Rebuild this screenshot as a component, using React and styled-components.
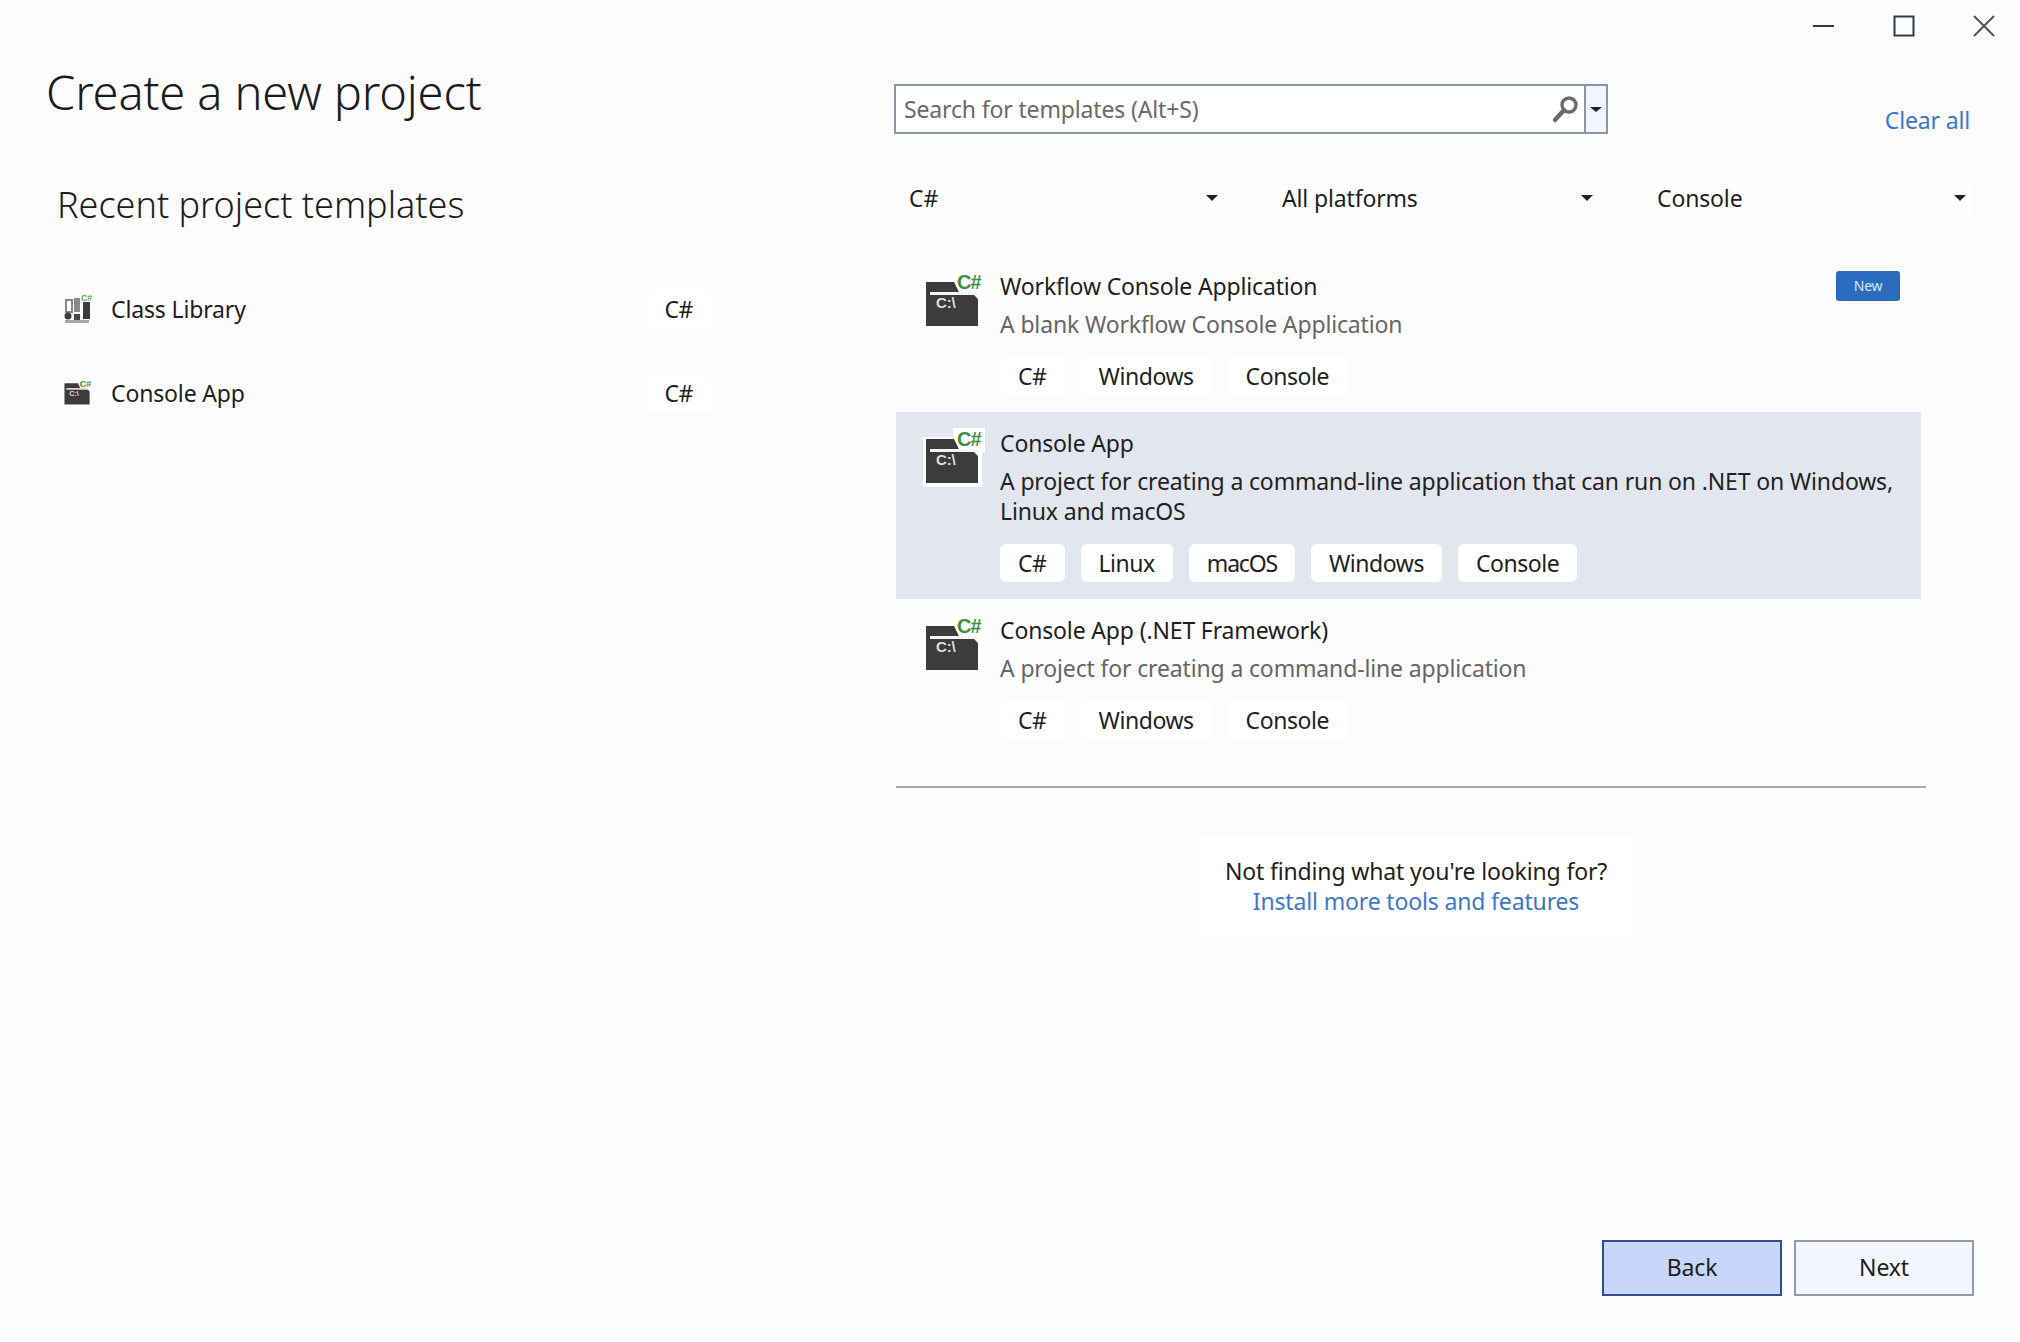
import React from "react";
import styled, { createGlobalStyle } from "styled-components";

const FONT = `"Noto Sans", "Open Sans", sans-serif`;

const Global = createGlobalStyle`
  html, body { margin: 0; padding: 0; background: #fcfcfc; overflow: hidden; }
  * { box-sizing: border-box; }
`;

const Page = styled.div`
  width: 2020px;
  height: 1342px;
  background: #fcfcfc;
  display: flex;
  flex-direction: column;
  font-family: ${FONT};
  font-size: 23px;
  letter-spacing: -0.15px;
  color: #1e1e1e;
`;

const TitleBar = styled.div`
  height: 52px;
  display: flex;
  justify-content: flex-end;
  gap: 40px;
  padding-right: 16px;
`;

const WinButton = styled.div`
  width: 40px;
  height: 52px;
  display: flex;
  align-items: center;
  justify-content: center;
`;

const Main = styled.div`
  flex: 1;
  display: grid;
  grid-template-columns: 894px 1fr;
  min-height: 0;
`;

const LeftColumn = styled.div`
  padding: 10px 0 0 46px;
`;

const PageTitle = styled.h1`
  margin: 0;
  font-size: 47px;
  font-weight: 300;
  line-height: 60px;
  letter-spacing: -0.13px;
  color: #1c1c1c;
`;

const SectionTitle = styled.h2`
  margin: 58px 0 0 11px;
  font-size: 36px;
  font-weight: 300;
  line-height: 50px;
  letter-spacing: 0;
  color: #1c1c1c;
`;

const RecentList = styled.div`
  margin: 60px 0 0 17px;
  width: 648px;
  display: flex;
  flex-direction: column;
  gap: 46px;
`;

const RecentRow = styled.div`
  display: flex;
  align-items: center;
  height: 38px;
`;

const RecentName = styled.span`
  margin-left: 18px;
  flex: 1;
`;

const RightColumn = styled.div`
  padding-top: 32px;
  display: flex;
  flex-direction: column;
`;

const SearchRow = styled.div`
  display: flex;
  justify-content: space-between;
  align-items: flex-end;
  width: 1076px;
`;

const SearchBox = styled.div`
  width: 714px;
  height: 50px;
  border: 2px solid #8b95a8;
  background: #fff;
  display: flex;
  align-items: stretch;
`;

const SearchText = styled.div`
  flex: 1;
  padding: 1px 0 0 8px;
  line-height: 44px;
  color: #6a6a6a;
`;

const SearchIconWrap = styled.div`
  width: 36px;
  display: flex;
  align-items: center;
  justify-content: center;
`;

const SearchDrop = styled.div`
  width: 22px;
  background: #f2f5fd;
  border-left: 2px solid #8b95a8;
  display: flex;
  align-items: center;
  justify-content: center;
`;

const Link = styled.a`
  color: #3b78c6;
  line-height: 28px;
`;

const Filters = styled.div`
  margin: 43px 0 0 4px;
  display: grid;
  grid-template-columns: 326px 328px 326px;
  column-gap: 47px;
`;

const Filter = styled.div`
  height: 40px;
  padding: 1px 6px 0 11px;
  background: #fefefe;
  display: flex;
  align-items: center;
  justify-content: space-between;
`;

const Caret = styled.span`
  width: 0;
  height: 0;
  border-left: 6px solid transparent;
  border-right: 6px solid transparent;
  border-top: ${(p) => p.$h || 6}px solid #222;
`;

const Templates = styled.div`
  margin: 38px 0 0 2px;
  width: 1025px;
  display: flex;
  flex-direction: column;
`;

const Template = styled.div`
  display: grid;
  grid-template-columns: 77px 1fr;
  padding: 16px 20px 17px 27px;
  background: ${(p) => (p.$selected ? "#e3e6ee" : "transparent")};
`;

const TemplateBody = styled.div`
  display: flex;
  flex-direction: column;
  min-width: 0;
`;

const TemplateHead = styled.div`
  display: flex;
  justify-content: space-between;
  align-items: flex-start;
  line-height: 30px;
`;

const NewBadge = styled.span`
  width: 64px;
  height: 30px;
  margin-right: 1px;
  border-radius: 3px;
  background: #2a6cbe;
  color: #dce8f8;
  font-size: 14px;
  letter-spacing: -0.3px;
  line-height: 30px;
  text-align: center;
`;

const Description = styled.div`
  margin-top: 8px;
  line-height: 30px;
  color: ${(p) => (p.$selected ? "#222" : "#666")};
`;

const Chips = styled.div`
  margin-top: 18px;
  display: flex;
  gap: 16px;
`;

const Chip = styled.span`
  height: 38px;
  padding: 0 18px;
  border-radius: 6px;
  background: #fff;
  line-height: 38px;
  letter-spacing: ${(p) => (p.$tight ? "-1.2px" : "-0.45px")};
  color: #1e1e1e;
  white-space: nowrap;
`;

const Divider = styled.div`
  margin: 30px 0 0 2px;
  width: 1030px;
  height: 2px;
  background: #a8a8a8;
`;

const HelpWrap = styled.div`
  margin: 47px 0 0 2px;
  width: 1040px;
  display: flex;
  justify-content: center;
`;

const HelpBox = styled.div`
  width: 432px;
  height: 99px;
  padding-top: 21px;
  background: #fff;
  text-align: center;
  line-height: 30px;
`;

const HelpLine = styled.div``;

const Footer = styled.div`
  display: flex;
  justify-content: flex-end;
  gap: 12px;
  padding: 0 46px 46px 0;
`;

const Button = styled.button`
  width: 180px;
  height: 56px;
  padding: 0 0 2px;
  font: inherit;
  letter-spacing: inherit;
  color: #1e1e1e;
  border: 2px solid ${(p) => (p.$active ? "#2f4f8c" : "#8f99aa")};
  background: ${(p) => (p.$active ? "#c8d7f9" : "#f3f6fe")};
`;

const ConsoleIcon = ({ size = 62 }) => (
  <svg width={size} height={(size * 60) / 62} viewBox="0 0 62 60">
    <path d="M0 9H30V0H62V25H59V59H0Z" fill="#fff" />
    <path d="M3 11H31L36 21H48L55 28V55H3Z" fill="#3c3c3c" />
    <path d="M33 11h5l4 10H36Z" fill="#fff" />
    <rect x="7" y="21" width="47" height="3" fill="#f4f4f4" />
    <text x="13" y="37" fontFamily="Liberation Sans" fontSize="15" fontWeight="700" fill="#dedede">
      C:\
    </text>
    <text x="34" y="18" fontFamily="Liberation Sans" fontSize="20" fontWeight="700" fill="#3f8f3f" letterSpacing="-1">
      C#
    </text>
  </svg>
);

const LibraryIcon = () => (
  <svg width="30" height="30" viewBox="0 0 30 30">
    <rect x="3" y="6" width="6" height="12" fill="#fff" stroke="#888" strokeWidth="2" />
    <rect x="11" y="4" width="6" height="14" fill="#8a8a8a" />
    <rect x="20" y="8" width="7" height="17" fill="#3c3c3c" />
    <rect x="11" y="20" width="6" height="7" fill="#4a4a4a" />
    <circle cx="5" cy="22" r="3.5" fill="#3c3c3c" />
    <rect x="2" y="26" width="24" height="3" fill="#a6a6a6" />
    <text x="18" y="7" fontFamily="Liberation Sans" fontSize="9" fontWeight="700" fill="#57a857">
      C#
    </text>
  </svg>
);

const Minimize = () => (
  <svg width="22" height="4" viewBox="0 0 22 4">
    <rect x="0" y="1" width="21" height="2" fill="#2d3a4f" />
  </svg>
);
const Maximize = () => (
  <svg width="22" height="22" viewBox="0 0 22 22">
    <rect x="1.5" y="1.5" width="19" height="19" fill="none" stroke="#2d3a4f" strokeWidth="2" />
  </svg>
);
const Close = () => (
  <svg width="22" height="22" viewBox="0 0 22 22">
    <path d="M1 1L21 21M21 1L1 21" stroke="#4f5663" strokeWidth="2" fill="none" />
  </svg>
);
const Magnifier = () => (
  <svg width="30" height="30" viewBox="0 0 30 30">
    <circle cx="18" cy="11" r="7" fill="none" stroke="#6c6c6c" strokeWidth="3.4" />
    <path d="M13 16L4 26" stroke="#6c6c6c" strokeWidth="4.4" strokeLinecap="round" />
  </svg>
);

const TemplateItem = ({ title, desc, chips, selected, badge }) => (
  <Template $selected={selected}>
    <ConsoleIcon />
    <TemplateBody>
      <TemplateHead>
        <span>{title}</span>
        {badge && <NewBadge>{badge}</NewBadge>}
      </TemplateHead>
      <Description $selected={selected}>{desc}</Description>
      <Chips>
        {chips.map((c) => (
          <Chip key={c} $tight={c === "macOS"}>{c}</Chip>
        ))}
      </Chips>
    </TemplateBody>
  </Template>
);

export default function App() {
  return (
    <Page>
      <Global />
      <TitleBar>
        <WinButton><Minimize /></WinButton>
        <WinButton><Maximize /></WinButton>
        <WinButton><Close /></WinButton>
      </TitleBar>
      <Main>
        <LeftColumn>
          <PageTitle>Create a new project</PageTitle>
          <SectionTitle>Recent project templates</SectionTitle>
          <RecentList>
            <RecentRow>
              <LibraryIcon />
              <RecentName>Class Library</RecentName>
              <Chip>C#</Chip>
            </RecentRow>
            <RecentRow>
              <ConsoleIcon size={30} />
              <RecentName>Console App</RecentName>
              <Chip>C#</Chip>
            </RecentRow>
          </RecentList>
        </LeftColumn>
        <RightColumn>
          <SearchRow>
            <SearchBox>
              <SearchText>Search for templates (Alt+S)</SearchText>
              <SearchIconWrap><Magnifier /></SearchIconWrap>
              <SearchDrop><Caret $h={5} /></SearchDrop>
            </SearchBox>
            <Link>Clear all</Link>
          </SearchRow>
          <Filters>
            <Filter><span>C#</span><Caret /></Filter>
            <Filter><span>All platforms</span><Caret /></Filter>
            <Filter><span>Console</span><Caret /></Filter>
          </Filters>
          <Templates>
            <TemplateItem
              title="Workflow Console Application"
              desc="A blank Workflow Console Application"
              chips={["C#", "Windows", "Console"]}
              badge="New"
            />
            <TemplateItem
              selected
              title="Console App"
              desc="A project for creating a command-line application that can run on .NET on Windows, Linux and macOS"
              chips={["C#", "Linux", "macOS", "Windows", "Console"]}
            />
            <TemplateItem
              title="Console App (.NET Framework)"
              desc="A project for creating a command-line application"
              chips={["C#", "Windows", "Console"]}
            />
          </Templates>
          <Divider />
          <HelpWrap>
            <HelpBox>
              <HelpLine>Not finding what you're looking for?</HelpLine>
              <HelpLine><Link>Install more tools and features</Link></HelpLine>
            </HelpBox>
          </HelpWrap>
        </RightColumn>
      </Main>
      <Footer>
        <Button $active>Back</Button>
        <Button>Next</Button>
      </Footer>
    </Page>
  );
}
